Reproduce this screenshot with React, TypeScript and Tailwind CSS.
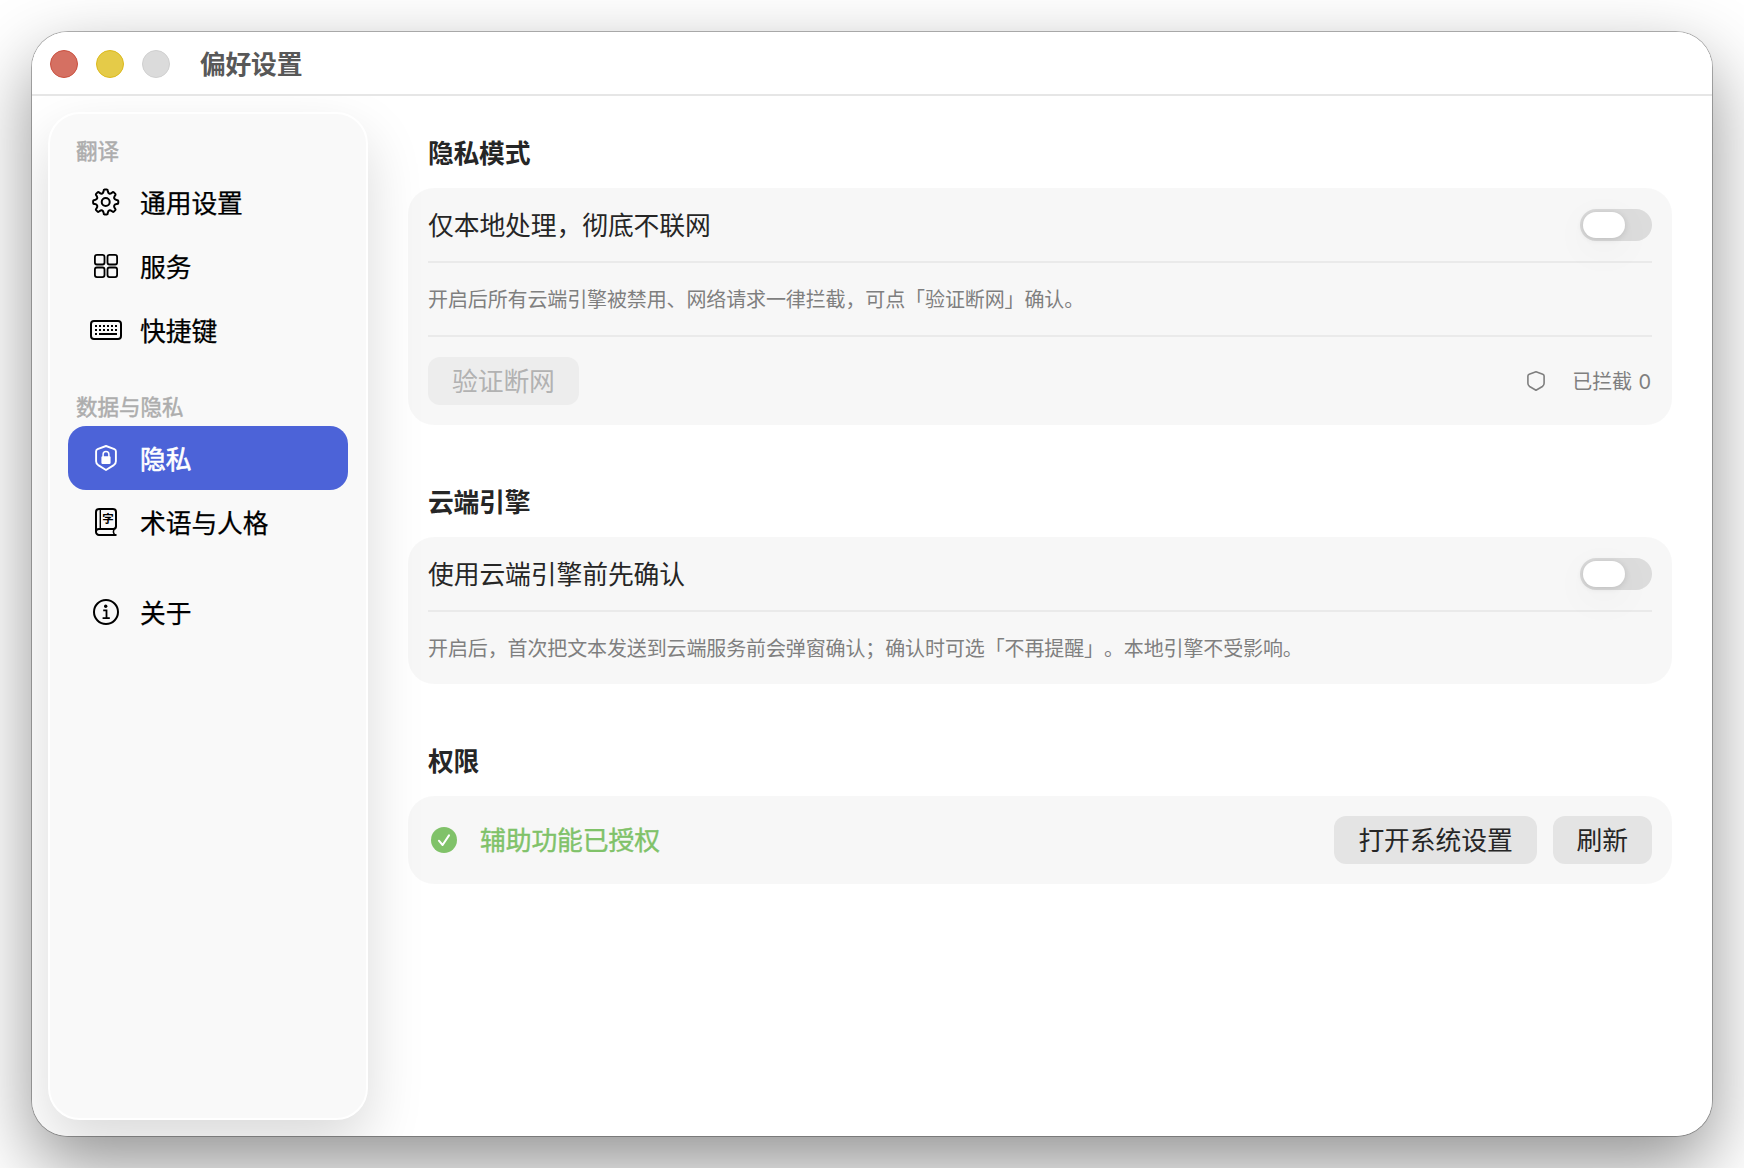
import { useState, type ReactNode } from "react";
import clsx from "clsx";

type PaneId = "general" | "services" | "shortcuts" | "privacy" | "glossary" | "about";

interface Pane {
	id: PaneId;
	label: string;
	icon: ReactNode;
}

interface PaneGroup {
	title?: string;
	panes: Pane[];
}

// Outline of an eight-toothed gear with round teeth and round notches,
// centred in a 28x28 box.
function gearOutline(): string {
	const at = (radius: number, degrees: number) => {
		const angle = (degrees * Math.PI) / 180;
		return `${(13.7 + radius * Math.sin(angle)).toFixed(2)} ${(14 - radius * Math.cos(angle)).toFixed(2)}`;
	};
	let d = `M${at(12.6, -5)}`;
	for (let tooth = 0; tooth < 8; tooth++) {
		const a = tooth * 45;
		d += ` L${at(12.6, a + 5)} Q${at(12.6, a + 10)} ${at(11, a + 11)}`;
		d += ` Q${at(7.6, a + 22.5)} ${at(11, a + 34)} Q${at(12.6, a + 35)} ${at(12.6, a + 40)}`;
	}
	return `${d}Z`;
}

const GEAR_PATH = gearOutline();

function GearIcon() {
	return (
		<svg width="28" height="28" viewBox="0 0 28 28" fill="none" stroke="currentColor">
			<path d={GEAR_PATH} strokeWidth="2" strokeLinejoin="round" />
			<circle cx="13.7" cy="14" r="4" strokeWidth="2" />
		</svg>
	);
}

function GridIcon() {
	return (
		<svg width="24" height="24" viewBox="0 0 24 24" fill="none" stroke="currentColor" strokeWidth="1.8">
			<rect x="0.9" y="0.9" width="9.6" height="9.6" rx="2" />
			<rect x="13.5" y="0.9" width="9.6" height="9.6" rx="2" />
			<rect x="0.9" y="13.5" width="9.6" height="9.6" rx="2" />
			<rect x="13.5" y="13.5" width="9.6" height="9.6" rx="2" />
		</svg>
	);
}

function KeyboardIcon() {
	return (
		<svg width="32" height="20" viewBox="0 0 32 20" fill="none" stroke="currentColor">
			<rect x="1" y="1" width="30" height="18" rx="3" strokeWidth="2" />
			<path d="M5 6h22M5 10h22" strokeWidth="2" strokeDasharray="2 2" />
			<path d="M5 14h2M9 14h16M25 14h2" strokeWidth="2" />
		</svg>
	);
}

function ShieldLockIcon() {
	return (
		<svg width="22" height="26" viewBox="0 0 22 26" fill="none" stroke="currentColor">
			<path
				d="M11 1 L19.4 4.1 Q20.9 4.7 20.9 6.2 V16.2 Q20.9 18.6 18.8 20.1 L11 25 L3.2 20.1 Q1.1 18.6 1.1 16.2 V6.2 Q1.1 4.7 2.6 4.1 Z"
				strokeWidth="1.9"
				strokeLinejoin="round"
			/>
			<path d="M8.1 12V9.5a2.9 2.9 0 0 1 5.8 0V12" strokeWidth="1.5" />
			<rect x="6.4" y="11.3" width="9.2" height="7.6" rx="1.2" fill="currentColor" stroke="none" />
		</svg>
	);
}

function ShieldIcon() {
	return (
		<svg width="18" height="20" viewBox="0 0 18 20" fill="none" stroke="currentColor">
			<path
				d="M9 0.8 L15.8 3.2 Q17.1 3.7 17.1 5 V12.2 Q17.1 14.3 15.4 15.5 L9 19.2 L2.6 15.5 Q0.9 14.3 0.9 12.2 V5 Q0.9 3.7 2.2 3.2 Z"
				strokeWidth="1.6"
				strokeLinejoin="round"
			/>
		</svg>
	);
}

function GlossaryIcon() {
	return (
		<svg width="22" height="28" viewBox="0 0 22 28" fill="none" stroke="currentColor" strokeWidth="2">
			<path d="M21.5 26.9H4A3 3 0 0 1 1 23.9V4A3 3 0 0 1 4 1H18A3 3 0 0 1 21 4V18.4A2.6 2.6 0 0 1 18.6 20.9H3.9A2.9 2.9 0 0 0 1 23.8" />
			<path d="M5.3 1V20.9" strokeWidth="1.4" />
			<path d="M19 21Q17.6 24 19.4 26.8" strokeWidth="1.6" />
			<text
				x="12.9"
				y="15.3"
				textAnchor="middle"
				fontSize="11.5"
				fontWeight="700"
				fill="currentColor"
				stroke="none"
			>
				字
			</text>
		</svg>
	);
}

function InfoIcon() {
	return (
		<svg width="26" height="26" viewBox="0 0 26 26" fill="none" stroke="currentColor">
			<circle cx="13" cy="13" r="12" strokeWidth="2" />
			<circle cx="12.7" cy="7.2" r="1.7" fill="currentColor" stroke="none" />
			<path d="M10.2 11.4h3.3v7.6M9.6 19.2h7.2" strokeWidth="1.8" />
		</svg>
	);
}

function CheckCircleIcon() {
	return (
		<svg width="26" height="26" viewBox="0 0 26 26" fill="none">
			<circle cx="13" cy="13" r="13" fill="#80c269" />
			<path
				d="M7.9 13.7l3.7 4.3 6.4-9.6"
				stroke="#fff"
				strokeWidth="2"
				strokeLinecap="round"
				strokeLinejoin="round"
			/>
		</svg>
	);
}

const PANE_GROUPS: PaneGroup[] = [
	{
		title: "翻译",
		panes: [
			{ id: "general", label: "通用设置", icon: <GearIcon /> },
			{ id: "services", label: "服务", icon: <GridIcon /> },
			{ id: "shortcuts", label: "快捷键", icon: <KeyboardIcon /> },
		],
	},
	{
		title: "数据与隐私",
		panes: [
			{ id: "privacy", label: "隐私", icon: <ShieldLockIcon /> },
			{ id: "glossary", label: "术语与人格", icon: <GlossaryIcon /> },
		],
	},
	{
		panes: [{ id: "about", label: "关于", icon: <InfoIcon /> }],
	},
];

function TitleBar() {
	return (
		<header className="flex h-16 shrink-0 items-center border-b-2 border-[#e6e6e6] bg-white pl-[18px]">
			<div className="flex gap-[18px] pt-0.5">
				<span className="size-7 rounded-full border border-[#c9503f] bg-[#d57062]" />
				<span className="size-7 rounded-full border border-[#dbb91d] bg-[#e5cb48]" />
				<span className="size-7 rounded-full border border-[#cfcfcf] bg-[#dbdbdb]" />
			</div>
			<h1 className="ml-[30px] font-bold tracking-[-0.25px] text-[#585858]">偏好设置</h1>
		</header>
	);
}

function Sidebar({ active, onSelect }: { active: PaneId; onSelect: (id: PaneId) => void }) {
	return (
		<nav className="flex w-80 shrink-0 flex-col rounded-[32px] border-2 border-white bg-[#f9f9f9] px-[18px] pt-[18px] shadow-[0_24px_56px_rgba(0,0,0,0.15)]">
			{PANE_GROUPS.map((group, index) => (
				<div key={index} className={clsx(index > 0 && "mt-[26px]")}>
					{group.title && (
						<h2 className="flex h-[38px] items-center pb-0.5 pl-2 text-[21.5px] tracking-normal text-[#adadad] [-webkit-text-stroke:0.5px]">
							{group.title}
						</h2>
					)}
					{group.panes.map((pane) => (
						<button
							key={pane.id}
							type="button"
							onClick={() => onSelect(pane.id)}
							className={clsx(
								"flex h-16 w-full items-center rounded-[18px] pl-[18px]",
								pane.id === active
									? "bg-[#4c63d8] text-white [-webkit-text-stroke:0.6px]"
									: "text-black [-webkit-text-stroke:0.25px]",
							)}
						>
							<span className="flex w-10 justify-center [-webkit-text-stroke:0]">{pane.icon}</span>
							<span className="ml-3.5 pb-px">{pane.label}</span>
						</button>
					))}
				</div>
			))}
		</nav>
	);
}

function Section({ title, children }: { title: string; children: ReactNode }) {
	return (
		<section>
			<h2 className="pb-0.5 pl-5 font-bold leading-9 tracking-[-0.25px]">{title}</h2>
			<div className="mt-4 divide-y-2 divide-black/5 rounded-[26px] bg-black/[0.032] px-5">
				{children}
			</div>
		</section>
	);
}

function ToggleRow({ label }: { label: string }) {
	const [on, setOn] = useState(false);

	return (
		<div className="box-content flex h-[73px] items-center justify-between">
			<span className="pb-0.5">{label}</span>
			<button
				type="button"
				role="switch"
				aria-checked={on}
				onClick={() => setOn(!on)}
				className={clsx(
					"mt-px flex h-8 w-[72px] items-center rounded-full px-[3px]",
					on ? "justify-end bg-[#4c63d8]" : "bg-[#dcdcdc]",
				)}
			>
				<span className="h-[26px] w-[42px] rounded-full bg-white shadow-[0_1px_6px_rgba(0,0,0,0.13),0_10px_40px_rgba(0,0,0,0.05)]" />
			</button>
		</div>
	);
}

function NoteRow({ children }: { children: ReactNode }) {
	return (
		<p className="box-content flex h-[72px] items-center text-[20px] tracking-[-0.12px] text-[#7f7f7f]">
			{children}
		</p>
	);
}

function PushButton({ children, disabled }: { children: ReactNode; disabled?: boolean }) {
	return (
		<button
			type="button"
			disabled={disabled}
			className="flex h-12 items-center rounded-xl bg-[#e4e4e4] px-6 pb-0.5 disabled:bg-[#ededed] disabled:text-[#b2b2b2]"
		>
			{children}
		</button>
	);
}

function PrivacyPane() {
	return (
		<main className="flex min-w-0 flex-1 flex-col gap-[58px] pt-[22px] pr-6 pl-10 text-[#262626]">
			<Section title="隐私模式">
				<ToggleRow label="仅本地处理，彻底不联网" />
				<NoteRow>开启后所有云端引擎被禁用、网络请求一律拦截，可点「验证断网」确认。</NoteRow>
				<div className="flex h-[88px] items-center justify-between">
					<PushButton disabled>验证断网</PushButton>
					<div className="flex items-center gap-[27px] pr-px text-[20px] tracking-[-0.1px] text-[#7f7f7f]">
						<ShieldIcon />
						<span>
							已拦截
							<span className="ml-px font-['Inter',sans-serif]"> 0</span>
						</span>
					</div>
				</div>
			</Section>

			<Section title="云端引擎">
				<ToggleRow label="使用云端引擎前先确认" />
				<NoteRow>
					开启后，首次把文本发送到云端服务前会弹窗确认；确认时可选「不再提醒」。本地引擎不受影响。
				</NoteRow>
			</Section>

			<Section title="权限">
				<div className="flex h-[88px] items-center">
					<div className="flex flex-1 items-center gap-[23px] pl-[3px] text-[#80c269]">
						<CheckCircleIcon />
						<span className="pb-0.5 [-webkit-text-stroke:0.4px]">辅助功能已授权</span>
					</div>
					<div className="flex gap-4">
						<PushButton>打开系统设置</PushButton>
						<PushButton>刷新</PushButton>
					</div>
				</div>
			</Section>
		</main>
	);
}

export default function App() {
	const [active, setActive] = useState<PaneId>("privacy");

	return (
		<div className="h-screen w-full overflow-hidden bg-white p-8 font-['Noto_Sans_CJK_SC',sans-serif] text-[25.8px] leading-none tracking-[-0.1px] [text-spacing-trim:space-all]">
			<div className="h-full rounded-[36px] shadow-[0_0_0_1px_rgba(0,0,0,0.28),0_29px_72px_rgba(0,0,0,0.43)]">
				<div className="flex h-full flex-col overflow-hidden rounded-[36px] bg-white">
					<TitleBar />
					<div className="flex min-h-0 flex-1 overflow-hidden p-4">
						<Sidebar active={active} onSelect={setActive} />
						<PrivacyPane />
					</div>
				</div>
			</div>
		</div>
	);
}
